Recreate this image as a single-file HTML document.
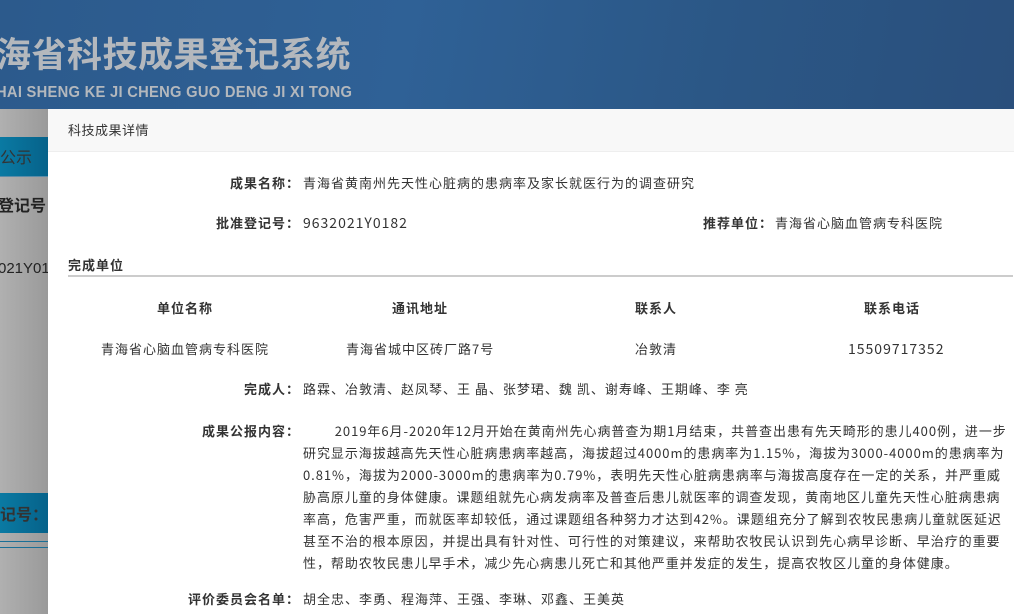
<!DOCTYPE html>
<html><head><meta charset="utf-8"><style>
*{margin:0;padding:0;box-sizing:border-box}
body{width:1014px;height:614px;overflow:hidden;position:relative;font-family:"Noto Sans CJK SC","Liberation Sans",sans-serif;font-size:13px;color:#333;background:#a9a9a9}
.ban{position:absolute;left:0;top:0;width:1014px;height:109px;background:linear-gradient(100deg,#2c5a8c 0%,#2f6196 40%,#2b5786 70%,#2a4f7c 100%)}
.t1{position:absolute;left:-4px;top:28px;font-size:35px;font-weight:bold;color:#b4b8bd;letter-spacing:.5px;white-space:nowrap;line-height:50px}
.t2{position:absolute;left:-4px;top:84px;font-size:16px;font-weight:bold;color:#b4b8bd;white-space:nowrap;letter-spacing:.3px;transform:scaleX(.92);transform-origin:left;font-family:"Liberation Sans",sans-serif}
.left{position:absolute;left:0;top:109px;width:48px;height:505px;background:linear-gradient(90deg,#b0b0b0,#9a9a9a)}
.bb{position:absolute;left:0;width:48px;background:linear-gradient(90deg,#0a7aa3,#06628a);color:#333;font-size:16px;white-space:nowrap;overflow:hidden}
.modal{position:absolute;left:48px;top:109px;width:966px;height:505px;background:#fff}
.mh{height:43px;background:#f8f8f8;border-bottom:1px solid #eee;padding:11px 0 0 20px;font-size:13px;color:#333;letter-spacing:.5px}
.a{position:absolute;white-space:nowrap;line-height:20px;letter-spacing:1px}
.b{font-weight:bold}
.l{right:714px;text-align:right}
</style></head><body>
<div class="ban"><div class="t1">海省科技成果登记系统</div><div class="t2">HAI SHENG KE JI CHENG GUO DENG JI XI TONG</div></div>
<div class="left"></div>
<div class="bb" style="top:137px;height:40px;padding:7px 0 0 0;border-bottom:1px solid #5a8ca8">公示</div>
<div class="a" style="left:-2px;top:194px;font-size:16px;color:#222;font-weight:bold;letter-spacing:0">登记号</div>
<div class="a" style="left:-2px;top:259px;font-size:15px;color:#222;font-family:'Liberation Sans',sans-serif;letter-spacing:0">021Y018</div>
<div class="bb" style="top:493px;height:40px;padding:8px 0 0 0;font-weight:bold">记号：</div>
<div style="position:absolute;left:0;top:541px;width:48px;height:1px;background:#1a6f96"></div>
<div style="position:absolute;left:0;top:547px;width:48px;height:1px;background:#1a6f96"></div>
<div class="modal"><div class="mh">科技成果详情</div></div>

<div class="a b l" style="top:173px">成果名称：</div>
<div class="a" style="left:303px;top:173px">青海省黄南州先天性心脏病的患病率及家长就医行为的调查研究</div>
<div class="a b l" style="top:213px">批准登记号：</div>
<div class="a" style="left:303px;top:213px;font-size:14px">9632021Y0182</div>
<div class="a b" style="right:241px;top:213px">推荐单位：</div>
<div class="a" style="left:775px;top:213px">青海省心脑血管病专科医院</div>

<div class="a b" style="left:68px;top:255px">完成单位</div>
<div style="position:absolute;left:68px;top:275px;width:945px;height:2px;background:#ccc"></div>

<div class="a b" style="left:157px;top:298px">单位名称</div>
<div class="a b" style="left:392px;top:298px">通讯地址</div>
<div class="a b" style="left:635px;top:298px">联系人</div>
<div class="a b" style="left:864px;top:298px">联系电话</div>
<div class="a" style="left:101px;top:339px">青海省心脑血管病专科医院</div>
<div class="a" style="left:346px;top:339px">青海省城中区砖厂路7号</div>
<div class="a" style="left:635px;top:339px">冶敦清</div>
<div class="a" style="left:848px;top:339px;font-size:14px">15509717352</div>

<div class="a b l" style="top:379px">完成人：</div>
<div class="a" style="left:303px;top:379px">路霖、冶敦清、赵凤琴、王 晶、张梦珺、魏 凯、谢寿峰、王期峰、李 亮</div>

<div class="a b l" style="top:421px">成果公报内容：</div>
<div class="a" style="left:303px;top:420px;line-height:22px;letter-spacing:.95px">　　 2019年6月-2020年12月开始在黄南州先心病普查为期1月结束，共普查出患有先天畸形的患儿400例，进一步<br>研究显示海拔越高先天性心脏病患病率越高，海拔超过4000m的患病率为1.15%，海拔为3000-4000m的患病率为<br>0.81%，海拔为2000-3000m的患病率为0.79%，表明先天性心脏病患病率与海拔高度存在一定的关系，并严重威<br>胁高原儿童的身体健康。课题组就先心病发病率及普查后患儿就医率的调查发现，黄南地区儿童先天性心脏病患病<br>率高，危害严重，而就医率却较低，通过课题组各种努力才达到42%。课题组充分了解到农牧民患病儿童就医延迟<br>甚至不治的根本原因，并提出具有针对性、可行性的对策建议，来帮助农牧民认识到先心病早诊断、早治疗的重要<br>性，帮助农牧民患儿早手术，减少先心病患儿死亡和其他严重并发症的发生，提高农牧区儿童的身体健康。</div>

<div class="a b l" style="top:589px">评价委员会名单：</div>
<div class="a" style="left:303px;top:589px">胡全忠、李勇、程海萍、王强、李琳、邓鑫、王美英</div>
</body></html>
